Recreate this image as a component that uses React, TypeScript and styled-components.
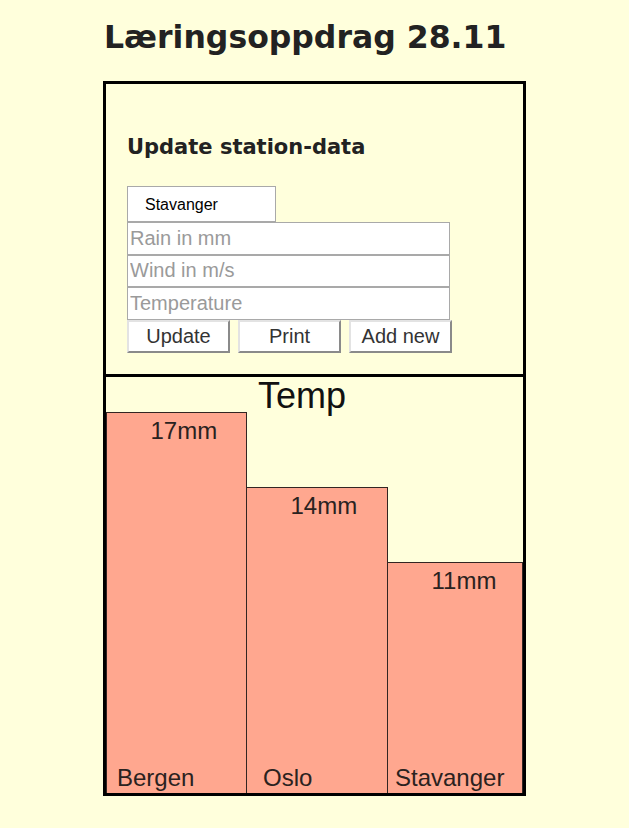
import React from "react";
import styled, { createGlobalStyle } from "styled-components";

const Global = createGlobalStyle`
  html, body {
    margin: 0;
    padding: 0;
    background: #ffffdc;
  }
  body {
    font-family: "Liberation Sans", Arial, sans-serif;
  }
`;

const Page = styled.div`
  width: 423px;
  margin: 0 auto;
  padding-top: 18px;
  padding-bottom: 32px;
`;

const Title = styled.h1`
  margin: 0 0 25px 1px;
  font-family: "DejaVu Sans", Verdana, sans-serif;
  font-weight: bold;
  font-size: 31.5px;
  line-height: 38px;
  color: #222;
`;

const Frame = styled.div`
  border: 3px solid #000;
  display: flex;
  flex-direction: column;
`;

const FormSection = styled.section`
  height: 293px;
  box-sizing: border-box;
  padding: 51px 21px 0 21px;
  border-bottom: 3px solid #000;
  display: flex;
  flex-direction: column;
  align-items: flex-start;
`;

const FormTitle = styled.h3`
  margin: 0 0 26px 0;
  font-family: "DejaVu Sans", Verdana, sans-serif;
  font-weight: bold;
  font-size: 21px;
  line-height: 25px;
  color: #222;
`;

const StationSelect = styled.select`
  appearance: none;
  -webkit-appearance: none;
  width: 149px;
  height: 36px;
  box-sizing: border-box;
  border: 1px solid #a9a9a9;
  border-radius: 0;
  background: #fff;
  padding: 0 0 0 17px;
  font-family: "Liberation Sans", Arial, sans-serif;
  font-size: 16px;
  color: #000;
  outline: none;
`;

const Field = styled.input`
  display: block;
  width: 323px;
  height: 32.5px;
  box-sizing: border-box;
  border: 1px solid #a9a9a9;
  margin: 0;
  padding: 0 2px;
  background: #fff;
  font-family: "Liberation Sans", Arial, sans-serif;
  font-size: 20px;
  color: #000;
  outline: none;
  &::placeholder {
    color: #9a9a9a;
  }
`;

const ButtonRow = styled.div`
  display: flex;
  gap: 8px;
`;

const Button = styled.button`
  width: 103px;
  height: 33px;
  box-sizing: border-box;
  background: #fff;
  border: 2px solid;
  border-color: #e3e3e3 #8a8a8a #8a8a8a #e3e3e3;
  padding: 0;
  font-family: "Liberation Sans", Arial, sans-serif;
  font-size: 20px;
  color: #333;
  cursor: pointer;
`;

const ChartArea = styled.div`
  height: 416px;
  overflow: hidden;
`;

type Station = {
  name: string;
  value: number;
  x: number;
  width: number;
  top: number;
  nameOffset: number;
};

const stations: Station[] = [
  { name: "Bergen", value: 17, x: 0.5, width: 140, top: 35.5, nameOffset: 11 },
  { name: "Oslo", value: 14, x: 140.5, width: 141, top: 110.5, nameOffset: 17 },
  { name: "Stavanger", value: 11, x: 281.5, width: 135, top: 185.5, nameOffset: 8 },
];

function Chart() {
  return (
    <svg width="417" height="416" viewBox="0 0 417 416">
      <text
        x="196"
        y="31"
        textAnchor="middle"
        fontFamily="'Liberation Sans', Arial, sans-serif"
        fontSize="36"
        fill="#111"
      >
        Temp
      </text>
      {stations.map((s) => (
        <g key={s.name}>
          <rect
            x={s.x}
            y={s.top}
            width={s.width}
            height={416 - s.top + 2}
            fill="#ffa78f"
            stroke="#332522"
            strokeWidth="1"
          />
          <text
            x={s.x + 44}
            y={s.top + 26.5}
            fontFamily="'Liberation Sans', Arial, sans-serif"
            fontSize="24"
            fill="#2a2220"
          >
            {s.value}mm
          </text>
          <text
            x={Math.floor(s.x) + s.nameOffset}
            y="409"
            fontFamily="'Liberation Sans', Arial, sans-serif"
            fontSize="24"
            fill="#2a2220"
          >
            {s.name}
          </text>
        </g>
      ))}
    </svg>
  );
}

export default function App() {
  return (
    <>
      <Global />
      <Page>
        <Title>Læringsoppdrag 28.11</Title>
        <Frame>
          <FormSection>
            <FormTitle>Update station-data</FormTitle>
            <StationSelect defaultValue="Stavanger">
              <option>Bergen</option>
              <option>Oslo</option>
              <option>Stavanger</option>
            </StationSelect>
            <Field placeholder="Rain in mm" />
            <Field placeholder="Wind in m/s" />
            <Field placeholder="Temperature" />
            <ButtonRow>
              <Button>Update</Button>
              <Button>Print</Button>
              <Button>Add new</Button>
            </ButtonRow>
          </FormSection>
          <ChartArea>
            <Chart />
          </ChartArea>
        </Frame>
      </Page>
    </>
  );
}
